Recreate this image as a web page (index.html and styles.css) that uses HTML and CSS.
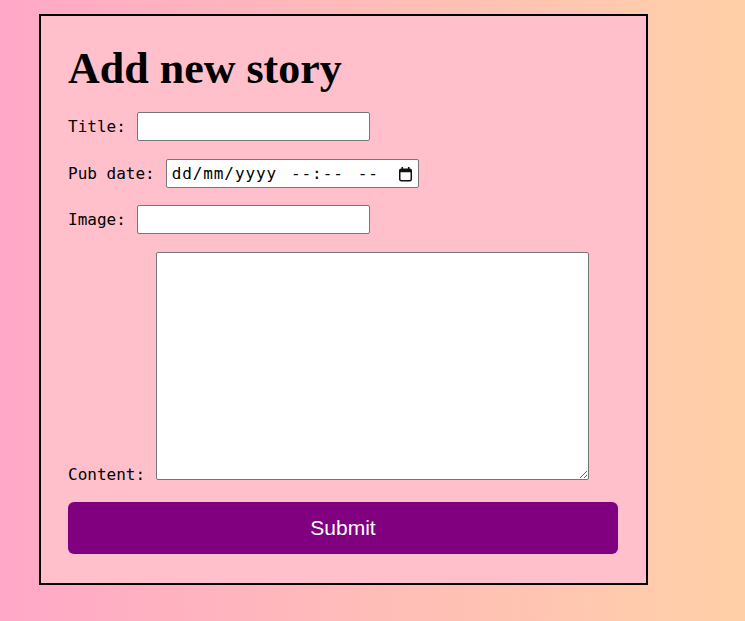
FILE: index.html
```html
<!DOCTYPE html>
<html lang="en">
<head>
<meta charset="utf-8">
<title>Add new story</title>
<link rel="stylesheet" href="styles.css">
</head>
<body>
<form class="card">
  <h1 class="heading">Add new story</h1>
  <div class="row">
    <label class="label" for="title">Title:</label>
    <input class="field" id="title" type="text">
  </div>
  <div class="row">
    <label class="label" for="pub">Pub date:</label>
    <span class="field field-date" id="pub" role="textbox" tabindex="0">
      <span class="dt-text">
        <span class="dt-seg">dd/mm/yyyy</span>
        <span class="dt-seg">--:--</span>
        <span class="dt-seg">--</span>
      </span>
      <svg class="dt-icon" width="15" height="16" viewBox="0 0 15 16" aria-hidden="true">
        <rect x="1.75" y="3.25" width="11.5" height="11.5" rx="1.5" fill="none" stroke="#111" stroke-width="1.5"/>
        <rect x="1.75" y="3.25" width="11.5" height="3" fill="#111"/>
        <rect x="3.5" y="1" width="1.6" height="3" fill="#111"/>
        <rect x="9.9" y="1" width="1.6" height="3" fill="#111"/>
      </svg>
    </span>
  </div>
  <div class="row row-tight">
    <label class="label" for="image">Image:</label>
    <input class="field" id="image" type="text">
  </div>
  <div class="row row-content">
    <label class="label label-bottom" for="content">Content:</label>
    <textarea class="area" id="content"></textarea>
  </div>
  <button class="submit" type="submit">Submit</button>
</form>
</body>
</html>
```

FILE: styles.css
```css
html {
  min-height: 100%;
  background: linear-gradient(to right, #ffa8c8, #ffd0a8);
}

body {
  margin: 0;
  min-height: 621px;
}

.card {
  width: 550px;
  margin: 14px 0 0 39px;
  padding: 27px 28px 29px 27px;
  background: #ffc0cb;
  border: 2px solid #000;
  display: flex;
  flex-direction: column;
}

.heading {
  margin: 0;
  font-family: "Liberation Serif", "Times New Roman", serif;
  font-weight: bold;
  font-size: 44px;
  line-height: 51px;
  color: #000;
}

.row {
  display: flex;
  align-items: center;
  gap: 11px;
  margin-top: 18px;
}

.row-tight {
  margin-top: 17px;
}

.row-content {
  align-items: flex-end;
  margin-top: 18px;
}

.label {
  font-family: "DejaVu Sans Mono", monospace;
  font-size: 16px;
  line-height: 19px;
  color: #000;
}

.label-bottom {
  margin-bottom: -4px;
}

.field {
  box-sizing: border-box;
  width: 233px;
  height: 29px;
  margin: 0;
  padding: 4px;
  border: 1px solid #767676;
  border-radius: 2px;
  background: #fff;
  font-family: "DejaVu Sans Mono", monospace;
  font-size: 16px;
  color: #000;
}

.field-date {
  width: 253px;
  display: inline-flex;
  align-items: center;
  justify-content: space-between;
  padding: 0 5px 0 5px;
}

.dt-text {
  display: flex;
  gap: 14px;
  line-height: 19px;
  letter-spacing: 0.9px;
}

.dt-icon {
  display: block;
  flex: none;
}

.area {
  box-sizing: border-box;
  width: 433px;
  height: 228px;
  margin: 0;
  padding: 4px;
  border: 1px solid #767676;
  border-radius: 2px;
  background: #fff;
  font-family: "DejaVu Sans Mono", monospace;
  font-size: 16px;
}

.submit {
  margin-top: 22px;
  width: 550px;
  height: 52px;
  border: none;
  border-radius: 6px;
  background: #800080;
  color: #fff;
  font-family: "Liberation Sans", Arial, sans-serif;
  font-size: 21px;
  cursor: pointer;
}
```
